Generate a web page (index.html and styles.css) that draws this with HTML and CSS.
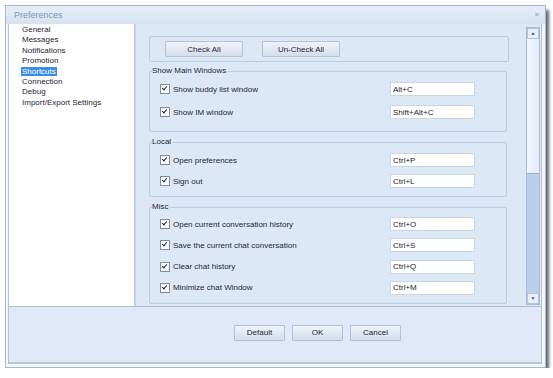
FILE: index.html
```html
<!DOCTYPE html>
<html lang="en">
<head>
    <meta charset="UTF-8"/>
    <title>Preferences</title>
    <link rel="stylesheet" href="styles.css">
</head>
<body>

<div class="window">
    <div class="titlebar">
        <span class="title">Preferences</span>
        <span class="close">&#x2715;</span>
    </div>

    <div class="frame">
        <div class="main">
            <ul class="nav">
                <li>General</li>
                <li>Messages</li>
                <li>Notifications</li>
                <li>Promotion</li>
                <li><span class="selected">Shortcuts</span></li>
                <li>Connection</li>
                <li>Debug</li>
                <li>Import/Export Settings</li>
            </ul>

            <div class="panel">
                <div class="content">
                    <div class="toolbar">
                        <button class="btn wide">Check All</button>
                        <button class="btn wide">Un-Check All</button>
                    </div>

                    <fieldset class="group main-windows">
                        <legend>Show Main Windows</legend>
                        <div class="row">
                            <label><span class="check"></span>Show buddy list window</label>
                            <input value="Alt+C" readonly/>
                        </div>
                        <div class="row">
                            <label><span class="check"></span>Show IM window</label>
                            <input value="Shift+Alt+C" readonly/>
                        </div>
                    </fieldset>

                    <fieldset class="group">
                        <legend>Local</legend>
                        <div class="row">
                            <label><span class="check"></span>Open preferences</label>
                            <input value="Ctrl+P" readonly/>
                        </div>
                        <div class="row">
                            <label><span class="check"></span>Sign out</label>
                            <input value="Ctrl+L" readonly/>
                        </div>
                    </fieldset>

                    <fieldset class="group misc">
                        <legend>Misc</legend>
                        <div class="row">
                            <label><span class="check"></span>Open current conversation history</label>
                            <input value="Ctrl+O" readonly/>
                        </div>
                        <div class="row">
                            <label><span class="check"></span>Save the current chat conversation</label>
                            <input value="Ctrl+S" readonly/>
                        </div>
                        <div class="row">
                            <label><span class="check"></span>Clear chat history</label>
                            <input value="Ctrl+Q" readonly/>
                        </div>
                        <div class="row">
                            <label><span class="check"></span>Minimize chat Window</label>
                            <input value="Ctrl+M" readonly/>
                        </div>
                    </fieldset>
                </div>

                <div class="scrollbar">
                    <div class="arrow">&#9650;</div>
                    <div class="thumb"></div>
                    <div class="track"></div>
                    <div class="arrow">&#9660;</div>
                </div>
            </div>
        </div>

        <div class="footer">
            <button class="btn">Default</button>
            <button class="btn">OK</button>
            <button class="btn">Cancel</button>
        </div>
    </div>
</div>

</body>
</html>
```

FILE: styles.css
```css
body {
  margin: 0;
  background: #ffffff;
  font-family: 'Liberation Sans', Arial, sans-serif;
  font-size: 8px;
  color: #1c2636;
}

.window {
  margin: 5px 0 0 5px;
  width: 539px;
  height: 361px;
  border: 1px solid #a9b9cc;
  background: #f3f6fa;
  box-shadow: 3px 5px 3px rgba(0, 0, 0, 0.6);
  display: flex;
  flex-direction: column;
}

.titlebar {
  height: 18px;
  display: flex;
  align-items: center;
  justify-content: space-between;
  padding: 0 5px 0 8px;
  background: linear-gradient(#e6eef8, #d6e2f0);
}

.title {
  color: #8496ad;
  font-size: 9px;
}

.close {
  color: #97a6b8;
  font-size: 7px;
}

.frame {
  flex: 1;
  margin: 0 3px 3px 2px;
  border: 1px solid #b6c6da;
  border-top: none;
  background: #dfe9f7;
  display: flex;
  flex-direction: column;
}

.main {
  height: 282px;
  display: flex;
  border-bottom: 1px solid #a9bdd6;
}

.nav {
  list-style: none;
  margin: 0;
  padding: 1px 0 0 13px;
  width: 112px;
  background: #ffffff;
  border-right: 1px solid #b9c9dd;
}

.nav li {
  height: 10.4px;
  line-height: 10.4px;
}

.nav .selected {
  background: #3a8ee6;
  color: #ffffff;
  padding: 0 1px;
  margin-left: -1px;
}

.panel {
  flex: 1;
  display: flex;
  background: #dde8f7;
}

.content {
  flex: 1;
  overflow: hidden;
  padding: 12px 0 0 13px;
  border-left: 1px solid #c6d5e8;
}

.toolbar {
  width: 343px;
  height: 24px;
  border: 1px solid #b9cce3;
  border-radius: 2px;
  display: flex;
  align-items: center;
  gap: 19px;
  padding-left: 15px;
}

.btn {
  height: 16px;
  width: 51px;
  padding: 0;
  font-family: inherit;
  font-size: 8px;
  color: #1c2636;
  border: 1px solid #b3c2d4;
  border-radius: 1px;
  background: linear-gradient(#eef3f9, #d3deeb);
}

.btn.wide {
  width: 78px;
}

.group {
  width: 358px;
  margin: 4px 0 0 0;
  padding: 6px 0 8px 0;
  border: 1px solid #b9cce3;
  border-radius: 2px;
  box-sizing: border-box;
  display: flex;
  flex-direction: column;
  gap: 7px;
}

.group + .group {
  margin-top: 5px;
}

.group legend {
  padding: 0 2px 0 0;
  margin-left: 2px;
  line-height: 10px;
}

.main-windows {
  gap: 9px;
  padding: 6px 0 12px 0;
}

.misc {
  gap: 7.3px;
  padding-top: 5px;
}

.row {
  display: flex;
  align-items: center;
  justify-content: space-between;
  padding: 0 31px 0 10px;
}

.row label {
  display: flex;
  align-items: center;
  gap: 3px;
}

.check {
  width: 8px;
  height: 8px;
  border: 1px solid #7d8ea3;
  background: #ffffff;
  position: relative;
}

.check::after {
  content: "";
  position: absolute;
  left: 2px;
  top: 0px;
  width: 2px;
  height: 4px;
  border: solid #1c2636;
  border-width: 0 1.5px 1.5px 0;
  transform: rotate(40deg);
}

.row input {
  width: 81px;
  height: 12px;
  padding: 0 0 0 2px;
  font-family: inherit;
  font-size: 8px;
  color: #1c2636;
  border: 1px solid #c9d6e6;
  background: #ffffff;
}

.scrollbar {
  width: 12px;
  margin: 3px 1px 1px 0;
  border: 1px solid #a6bbd5;
  display: flex;
  flex-direction: column;
  background: #eef3fa;
}

.arrow {
  height: 9px;
  font-size: 5px;
  line-height: 9px;
  text-align: center;
  color: #4a5a70;
  background: #e8eff8;
  border: 1px solid #b3c5dc;
}

.thumb {
  height: 134px;
  background: linear-gradient(90deg, #f3f7fc, #e2ebf7);
  border-bottom: 1px solid #9db4d1;
}

.track {
  flex: 1;
  background: #b9cfea;
}

.footer {
  flex: 1;
  display: flex;
  align-items: center;
  gap: 7px;
  padding: 0 0 4px 225px;
  border-bottom: 1px solid #b6c6da;
}
```
